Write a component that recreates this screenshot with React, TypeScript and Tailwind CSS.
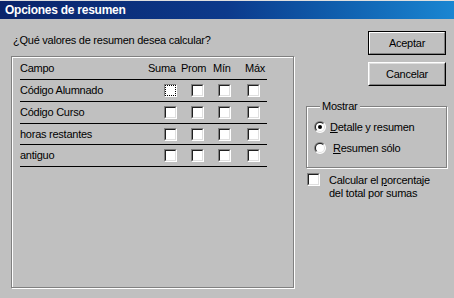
import React from "react";

function Check({ focus = false, className = "" }: { focus?: boolean; className?: string }) {
	return (
		<div
			className={`w-[13px] h-[13px] shrink-0 border border-t-[#808080] border-l-[#808080] border-b-white border-r-white ${className}`}
		>
			{focus ? (
				<div className="w-full h-full bg-white border border-dotted border-black" />
			) : (
				<div className="w-full h-full bg-white border border-t-[#202020] border-l-[#202020] border-b-[#dfdfdf] border-r-[#dfdfdf]" />
			)}
		</div>
	);
}

function Radio({ checked = false }: { checked?: boolean }) {
	return (
		<svg width="12" height="12" viewBox="0 0 12 12" className="shrink-0">
			<path d="M1.757 10.243A6 6 0 0 1 10.243 1.757Z" fill="#808080" />
			<path d="M1.757 10.243A6 6 0 0 0 10.243 1.757Z" fill="#ffffff" />
			<path d="M2.464 9.536A5 5 0 0 1 9.536 2.464Z" fill="#202020" />
			<path d="M2.464 9.536A5 5 0 0 0 9.536 2.464Z" fill="#dfdfdf" />
			<circle cx="6" cy="6" r="4" fill="#ffffff" />
			{checked && <circle cx="6" cy="6" r="2" fill="#000000" />}
		</svg>
	);
}

function Row({ label, focus = false, h }: { label: string; focus?: boolean; h: string }) {
	return (
		<div className={`flex items-center border-b border-black ${h}`}>
			<span className="w-[144px]">{label}</span>
			<Check focus={focus} />
			<Check className="ml-[14px]" />
			<Check className="ml-[14px]" />
			<Check className="ml-[16px]" />
		</div>
	);
}

function App() {
	return (
		<div className="w-[454px] h-[298px] bg-[#c0c0c0] flex flex-col border-t border-[#dfdfdf] font-['Liberation_Sans',Arial,sans-serif] text-[11px] leading-[13px] tracking-[-0.25px] text-black">
			<div className="h-[18px] flex items-center pl-[5px] bg-linear-to-r from-[#0a246a] via-[#0c3a8c] to-[#1a86d2]">
				<span className="text-white font-bold text-[12px]">Opciones de resumen</span>
			</div>

			<div className="flex flex-1">
				<div className="pl-[11px] w-[295px] flex flex-col">
					<p className="mt-[15px] pl-[2px]">¿Qué valores de resumen desea calcular?</p>
					<div className="mt-[9px] w-[283px] h-[232px] border border-[#808080] shadow-[inset_1px_1px_0_#fff,1px_1px_0_#fff] pl-[8px]">
						<div className="w-[247px]">
							<div className="flex items-center h-[23px] border-b border-black">
								<span className="w-[128px]">Campo</span>
								<span className="w-[33px]">Suma</span>
								<span className="w-[32px]">Prom</span>
								<span className="w-[32px]">Mín</span>
								<span>Máx</span>
							</div>
							<Row label="Código Alumnado" focus h="h-[22px]" />
							<Row label="Código Curso" h="h-[22px]" />
							<Row label="horas restantes" h="h-[21px]" />
							<Row label="antiguo" h="h-[22px]" />
						</div>
					</div>
				</div>

				<div className="ml-[11px] w-[141px] flex flex-col">
					<button className="mt-[12px] ml-[62px] w-[78px] h-[24px] border border-black">
						<div className="w-full h-full flex items-center justify-center border border-t-white border-l-white border-b-[#808080] border-r-[#808080]">
							Aceptar
						</div>
					</button>
					<button className="mt-[7px] ml-[62px] w-[78px] h-[24px] border border-t-white border-l-white border-b-black border-r-black">
						<div className="w-full h-full flex items-center justify-center border border-t-[#dfdfdf] border-l-[#dfdfdf] border-b-[#808080] border-r-[#808080]">
							Cancelar
						</div>
					</button>

					<fieldset className="mt-[13px] w-[141px] h-[69px] border border-[#808080] shadow-[inset_1px_1px_0_#fff,1px_1px_0_#fff] pl-[7px]">
						<legend className="ml-[6px] px-[2px] leading-[14px] bg-[#c0c0c0]">Mostrar</legend>
						<div className="flex items-center h-[16px] mt-[6px]">
							<Radio checked />
							<span className="ml-[4px]">
								<u>D</u>etalle y resumen
							</span>
						</div>
						<div className="flex items-center h-[16px] mt-[5px]">
							<Radio />
							<span className="ml-[7px]">
								<u>R</u>esumen sólo
							</span>
						</div>
					</fieldset>

					<div className="mt-[5px] flex items-start">
						<Check className="ml-[1px]" />
						<p className="ml-[9px] mt-[1px]">
							Calcular el <u>p</u>orcentaje
							<br />
							del total por sumas
						</p>
					</div>
				</div>
			</div>
		</div>
	);
}

export default App;
